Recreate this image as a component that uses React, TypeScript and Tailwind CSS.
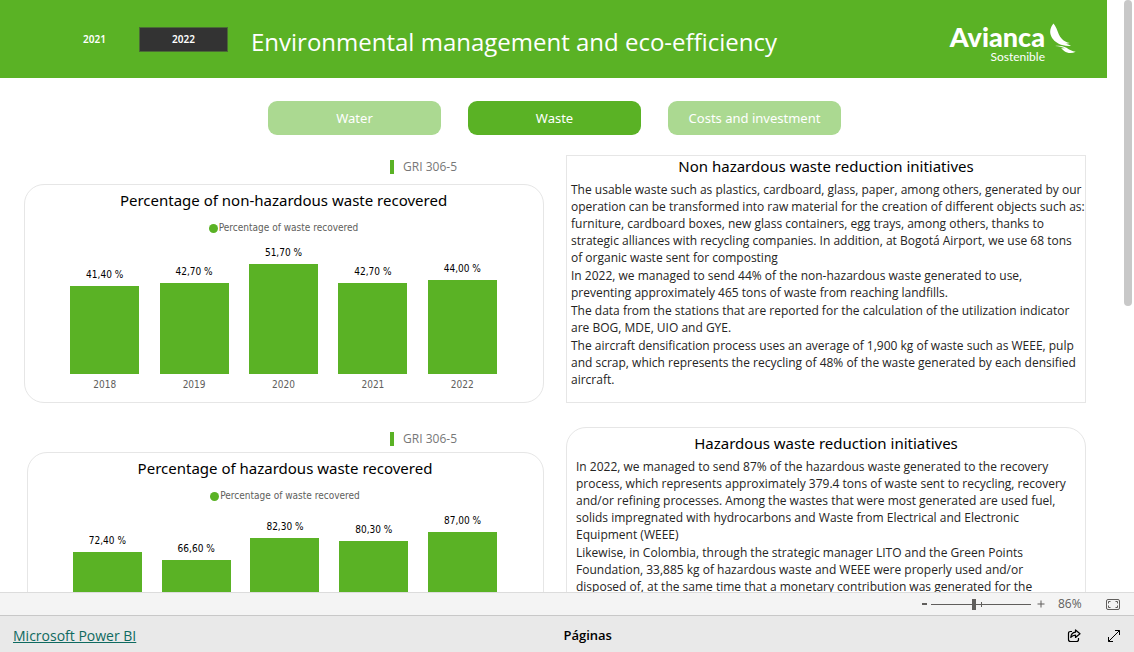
import React, { useState } from "react";

type Bar = { year: string; label: string; height: number };

const NON_HAZARDOUS: Bar[] = [
  { year: "2018", label: "41,40 %", height: 88 },
  { year: "2019", label: "42,70 %", height: 91 },
  { year: "2020", label: "51,70 %", height: 110 },
  { year: "2021", label: "42,70 %", height: 91 },
  { year: "2022", label: "44,00 %", height: 94 },
];

const HAZARDOUS: Bar[] = [
  { year: "2018", label: "72,40 %", height: 99 },
  { year: "2019", label: "66,60 %", height: 91 },
  { year: "2020", label: "82,30 %", height: 113 },
  { year: "2021", label: "80,30 %", height: 110 },
  { year: "2022", label: "87,00 %", height: 119 },
];

// One array per paragraph, one string per line
const NON_HAZARDOUS_TEXT = [
  [
    "The usable waste such as plastics, cardboard, glass, paper, among others, generated by our",
    "operation can be transformed into raw material for the creation of different objects such as:",
    "furniture, cardboard boxes, new glass containers, egg trays, among others, thanks to",
    "strategic alliances with recycling companies. In addition, at Bogotá Airport, we use 68 tons",
    "of organic waste sent for composting",
  ],
  [
    "In 2022, we managed to send 44% of the non-hazardous waste generated to use,",
    "preventing approximately 465 tons of waste from reaching landfills.",
  ],
  [
    "The data from the stations that are reported for the calculation of the utilization indicator",
    "are BOG, MDE, UIO and GYE.",
  ],
  [
    "The aircraft densification process uses an average of 1,900 kg of waste such as WEEE, pulp",
    "and scrap, which represents the recycling of 48% of the waste generated by each densified",
    "aircraft.",
  ],
];

const HAZARDOUS_TEXT = [
  [
    "In 2022, we managed to send 87% of the hazardous waste generated to the recovery",
    "process, which represents approximately 379.4 tons of waste sent to recycling, recovery",
    "and/or refining processes. Among the wastes that were most generated are used fuel,",
    "solids impregnated with hydrocarbons and Waste from Electrical and Electronic",
    "Equipment (WEEE)",
  ],
  [
    "Likewise, in Colombia, through the strategic manager LITO and the Green Points",
    "Foundation, 33,885 kg of hazardous waste and WEEE were properly used and/or",
    "disposed of, at the same time that a monetary contribution was generated for the",
  ],
];

const TABS = ["Water", "Waste", "Costs and investment"];

const Logo: React.FC = () => (
  <div className="flex items-start pt-2 text-white font-['Lato',sans-serif]">
    <div className="flex flex-col items-end">
      <span className="text-[27px] leading-7 font-black">Avianca</span>
      <span className="text-[12px] leading-3">Sostenible</span>
    </div>
    <svg className="ml-1 w-[28px] h-[32px]" viewBox="0 0 28 32" fill="currentColor" aria-hidden="true">
      <path d="M4.500 0.500C1.200 4.500 0.300 9 2.200 13.200C4.300 17.800 8.500 20.500 13 22C16 22.900 19 23.200 22 23C20.500 21.900 18.500 21.200 16 20.800C17.800 20.700 19.500 20.600 20.800 20C17.500 19.400 15 18 13 16C10 13 9.300 9.500 7.500 5.500C6.600 3.400 5.500 1.800 4.500 0.500Z" />
      <path d="M6 23C10 22.200 14 22.800 17.500 24.800C20.500 26.700 23 28.500 26.700 28.800C22.500 30.800 18 30 15.500 28.200C14.200 27.200 13.400 26.400 12 25.600C13.300 25.300 14.500 25.200 16 25.300C13 23.900 10 23.200 6 23Z" />
    </svg>
  </div>
);

const GriTag: React.FC = () => (
  <div className="flex justify-end items-center gap-[9px] h-[22px] pt-px pr-[87px]">
    <span className="w-1 h-[14px] bg-[#5ab225]" />
    <span className="text-[12px] text-[#777777] font-['Open_Sans',sans-serif]">GRI 306-5</span>
  </div>
);

const BarChart: React.FC<{ title: string; bars: Bar[] }> = ({ title, bars }) => (
  <div className="border border-[#e6e6e6] rounded-[20px] pl-[35px] pr-9 pb-[11px]">
    <h2 className="pt-[3px] text-center text-[15px] leading-6 text-black">{title}</h2>
    <div className="mt-[10px] flex items-center justify-center gap-px text-[10px] leading-3 text-[#605e5c] font-['DejaVu_Sans_Condensed',sans-serif]">
      <span className="w-[9px] h-[9px] rounded-full bg-[#5ab225]" />
      Percentage of waste recovered
    </div>
    <div className="mt-[13px] grid grid-cols-5 items-end justify-items-center text-[10px] leading-3 font-['DejaVu_Sans_Condensed',sans-serif]">
      {bars.map((bar) => (
        <div key={bar.year} className="flex flex-col items-center">
          <span className="mb-[5px] text-black">{bar.label}</span>
          <div className="w-[69px] bg-[#5ab225]" style={{ height: bar.height }} />
          <span className="mt-[5px] text-[#605e5c]">{bar.year}</span>
        </div>
      ))}
    </div>
  </div>
);

const Paragraphs: React.FC<{ items: string[][] }> = ({ items }) => (
  <div className="flex flex-col gap-px text-[12px] leading-[17px] text-[#252423] whitespace-nowrap font-['Open_Sans',sans-serif]">
    {items.map((lines) => (
      <p key={lines[0]}>
        {lines.map((line) => (
          <span key={line} className="block">
            {line}
          </span>
        ))}
      </p>
    ))}
  </div>
);

export default function App() {
  const [year, setYear] = useState("2022");
  const [tab, setTab] = useState("Waste");

  return (
    <div className="h-screen flex flex-col bg-white font-['Noto_Sans',sans-serif]">
      {/* Report canvas */}
      <div className="flex-1 min-h-0 flex overflow-hidden">
        <main className="flex-1 min-w-0">
          <header className="h-[78px] flex items-center bg-[#5ab225] text-white pl-[50px] pr-[30px]">
            <div className="flex">
              {["2021", "2022"].map((y) => (
                <button
                  key={y}
                  onClick={() => setYear(y)}
                  className={`w-[89px] h-[25px] text-[10px] font-semibold cursor-pointer ${
                    year === y ? "bg-[#333333] border border-[#4a6b35]" : ""
                  }`}
                >
                  {y}
                </button>
              ))}
            </div>
            <h1 className="flex-1 ml-[23px] pt-[5px] text-[24px] whitespace-nowrap font-['Open_Sans',sans-serif]">
              Environmental management and eco-efficiency
            </h1>
            <Logo />
          </header>

          <nav className="mt-[23px] pl-[2px] flex justify-center gap-[27px]">
            {TABS.map((name) => (
              <button
                key={name}
                onClick={() => setTab(name)}
                className={`w-[173px] h-[34px] pt-px rounded-[9px] text-[13px] text-white cursor-pointer ${
                  tab === name ? "bg-[#5ab225]" : "bg-[#abd991]"
                }`}
              >
                {name}
              </button>
            ))}
          </nav>

          <div className="mt-5 pl-6 pr-[21px] grid grid-cols-2 gap-x-[22px] gap-y-6">
            <section>
              <GriTag />
              <div className="mt-[7px]">
                <BarChart title="Percentage of non-hazardous waste recovered" bars={NON_HAZARDOUS} />
              </div>
            </section>
            <section className="border border-[#e6e6e6] px-1">
              <h2 className="mb-[5px] text-center text-[15px] leading-5 text-black">
                Non hazardous waste reduction initiatives
              </h2>
              <Paragraphs items={NON_HAZARDOUS_TEXT} />
            </section>
            <section>
              <GriTag />
              <div className="mt-[3px] ml-[3px]">
                <BarChart title="Percentage of hazardous waste recovered" bars={HAZARDOUS} />
              </div>
            </section>
            <section className="border border-[#e6e6e6] rounded-[20px] px-[9px] pt-[5px]">
              <h2 className="mb-[5px] text-center text-[15px] leading-5 text-black">
                Hazardous waste reduction initiatives
              </h2>
              <Paragraphs items={HAZARDOUS_TEXT} />
            </section>
          </div>
        </main>

        {/* Scrollbar */}
        <div className="w-[27px] pr-[2px] flex justify-end">
          <div className="w-2 h-[306px] rounded-full bg-[#c8c8c8]" />
        </div>
      </div>

      {/* Zoom bar */}
      <div className="h-[23px] shrink-0 flex items-center justify-end pr-[14px] bg-[#f4f4f4] border-t border-[#dcdcdc] text-[#605e5c]">
        <button aria-label="Zoom out" className="flex items-center w-[9px] h-3 cursor-pointer">
          <span className="w-[5px] h-[2px] bg-[#605e5c]" />
        </button>
        <div className="relative flex items-center">
          <input
            type="range"
            aria-label="Zoom"
            defaultValue={43}
            className="w-[100px] h-3 appearance-none bg-transparent [&::-webkit-slider-runnable-track]:h-px [&::-webkit-slider-runnable-track]:bg-[#605e5c] [&::-webkit-slider-thumb]:appearance-none [&::-webkit-slider-thumb]:w-1 [&::-webkit-slider-thumb]:h-[11px] [&::-webkit-slider-thumb]:-mt-[5px] [&::-webkit-slider-thumb]:bg-[#605e5c]"
          />
          <span className="absolute left-[50px] top-1 w-px h-[5px] bg-[#605e5c]" />
        </div>
        <button aria-label="Zoom in" className="ml-[6px] cursor-pointer">
          <svg className="w-2 h-2" viewBox="0 0 8 8" stroke="currentColor" fill="none">
            <path d="M0.500 4H7.500M4 0.500V7.500" />
          </svg>
        </button>
        <span className="ml-[13px] w-[48px] text-[12px] leading-4 font-['Open_Sans',sans-serif]">86%</span>
        <button aria-label="Fit to page" className="cursor-pointer">
          <svg className="w-[14px] h-[11px]" viewBox="0 0 14 11" stroke="currentColor" fill="none">
            <rect x="0.500" y="0.500" width="13" height="10" rx="1.500" />
            <path d="M2.500 4.500V2.500H4.500M9.500 2.500H11.500V4.500M11.500 6.500V8.500H9.500M4.500 8.500H2.500V6.500" />
          </svg>
        </button>
      </div>

      {/* Status bar */}
      <footer className="h-[37px] shrink-0 flex items-center pl-[13px] pr-[13px] bg-[#e9e9e9] border-t border-[#c8c8c8] font-['Open_Sans',sans-serif]">
        <a href="#" className="pt-[3px] text-[14px] text-[#0f6a60] underline">
          Microsoft Power BI
        </a>
        <span className="flex-1 pt-[3px] text-center text-[13px] font-semibold text-black">Páginas</span>
        <div className="flex items-center gap-[26px] pl-7 pt-[3px] text-black">
          <button aria-label="Share" className="cursor-pointer">
            <svg className="w-[14px] h-[14px]" viewBox="0 0 14 14" stroke="currentColor" strokeWidth="1.200" fill="none" strokeLinejoin="round">
              <path d="M5 2.500H3.500Q1.500 2.500 1.500 4.500V10.500Q1.500 12.500 3.500 12.500H9.500Q11.500 12.500 11.500 10.500V9" />
              <path d="M8.500 1V3.200C5.500 3.500 4 5.500 3.800 8.500C5 6.900 6.500 6.200 8.500 6.200V8.500L13 4.700Z" />
            </svg>
          </button>
          <button aria-label="Full screen" className="cursor-pointer">
            <svg className="w-[14px] h-[14px]" viewBox="0 0 14 14" stroke="currentColor" fill="none">
              <path d="M1.500 12.500L12.500 1.500M8 1.500H12.500V6M1.500 8V12.500H6" />
            </svg>
          </button>
        </div>
      </footer>
    </div>
  );
}
